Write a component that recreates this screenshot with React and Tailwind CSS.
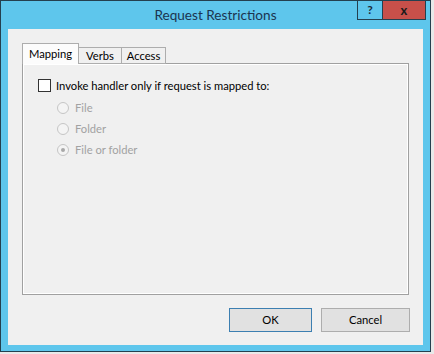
import { useState } from 'react';

const font = { fontFamily: 'Lato, "Noto Sans", sans-serif' };

function Radio({ label, checked }) {
  return (
    <div className="flex items-center h-[21px]">
      <span className="w-[12px] h-[12px] rounded-full border border-[#c5c5c5] bg-[#f4f4f4] flex items-center justify-center">
        {checked && <span className="w-[4px] h-[4px] rounded-full bg-[#a8a8a8]" />}
      </span>
      <span className="ml-[6px] text-[#a2a2a2]">{label}</span>
    </div>
  );
}

export default function App() {
  const [mapped, setMapped] = useState(false);

  return (
    <div className="w-[434px] h-[354px] bg-[#e9e9e9] text-[11.2px] leading-none" style={font}>
      <div className="w-[431px] h-[352px] bg-[#f4f4f4]">
        <div className="w-[431px] h-[352px] border border-[#24404f] bg-[#5ec6ec] flex flex-col">
          {/* Title bar */}
          <div className="relative h-[28px] shrink-0 flex items-center justify-center">
            <span className="text-[13.6px] text-[#1b3550] mt-[2px]">Request Restrictions</span>
            <div className="absolute top-[-1px] right-[4px] flex">
              <button className="w-[26px] h-[20px] bg-[#5ec6ec] border border-[#24404f] flex items-center justify-center text-[12px] font-bold text-[#1b2a3a]">
                ?
              </button>
              <button className="w-[43px] h-[20px] bg-[#c7504a] border border-l-0 border-[#24404f] flex items-center justify-center text-[13px] font-bold text-[#1a1a1a]">
                x
              </button>
            </div>
          </div>

          {/* Client area */}
          <div className="mx-[7px] mb-[6px] flex-1 bg-[#f0f0f0] px-[14px] pt-[14px] pb-[13px] flex flex-col">
            {/* Tabs */}
            <div className="flex items-end h-[21px] relative z-10">
              <div className="w-[57px] h-[21px] bg-[#fcfcfc] border border-b-0 border-[#adadad] flex items-center justify-center text-black">
                Mapping
              </div>
              <div className="w-[43px] h-[17px] bg-[#f0f0f0] border border-l-0 border-[#adadad] flex items-center justify-center text-black">
                Verbs
              </div>
              <div className="w-[44px] h-[17px] bg-[#f0f0f0] border border-l-0 border-[#adadad] flex items-center justify-center text-black">
                Access
              </div>
            </div>

            {/* Tab panel */}
            <div className="-mt-px h-[232px] border border-[#a0a0a0] shadow-[inset_-1px_-1px_0_#ffffff,inset_1px_1px_0_#ffffff] bg-[#f0f0f0] pl-[15px] pt-[15px]">
              <label className="flex items-center h-[13px] cursor-default">
                <button
                  onClick={() => setMapped(!mapped)}
                  className="w-[13px] h-[13px] border border-[#333333] bg-white"
                  aria-label="Invoke handler only if request is mapped to"
                />
                <span className="ml-[5px] text-black">Invoke handler only if request is mapped to:</span>
              </label>
              <div className="ml-[19px] mt-[5px] flex flex-col">
                <Radio label="File" />
                <Radio label="Folder" />
                <Radio label="File or folder" checked />
              </div>
            </div>

            {/* Buttons */}
            <div className="mt-auto flex justify-end gap-[9px]">
              <button className="w-[83px] h-[24px] bg-[#e1e1e1] border border-[#3c7fb1] text-black">OK</button>
              <button className="w-[89px] h-[24px] bg-[#e1e1e1] border border-[#adadad] text-black mr-[-1px]">Cancel</button>
            </div>
          </div>
        </div>
      </div>
    </div>
  );
}
